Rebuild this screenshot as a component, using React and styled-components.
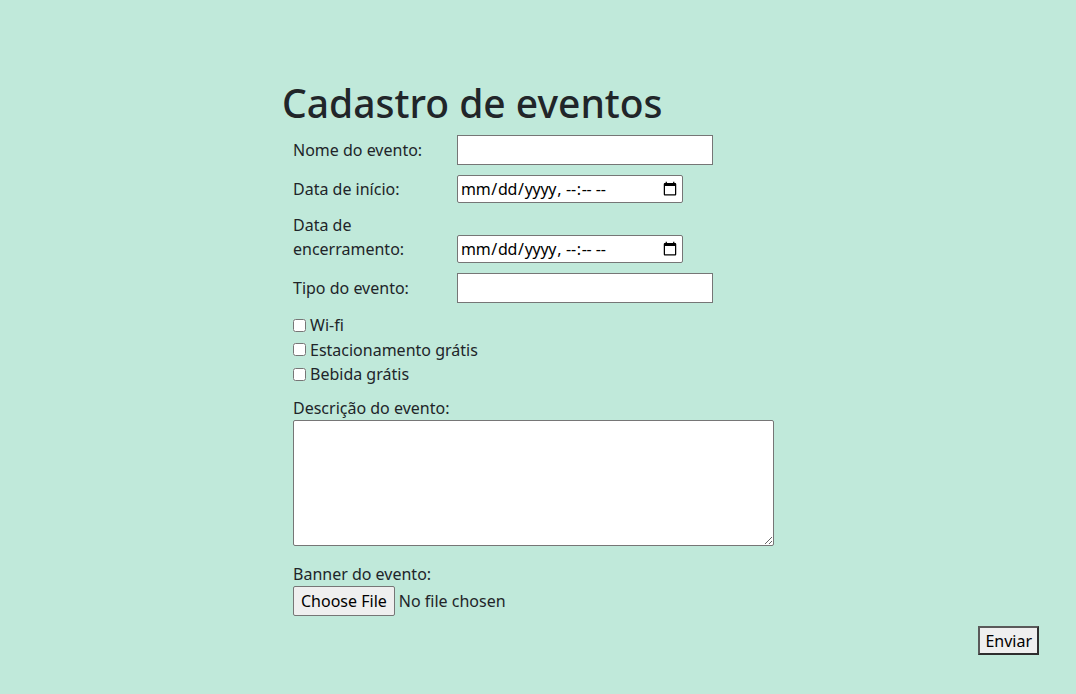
import React from "react";
import styled, { createGlobalStyle } from "styled-components";

const GlobalStyle = createGlobalStyle`
  body {
    margin: 0;
    background-color: #c0e9da;
    color: #212529;
    font-family: "Noto Sans", "Open Sans", sans-serif;
    font-size: 16px;
    line-height: 1.5;
  }
  input, button, textarea {
    font-family: inherit;
    font-size: inherit;
    line-height: inherit;
    color: #000;
  }
`;

const Page = styled.main`
  padding: 80px 37px 30px 282px;
`;

const Title = styled.h1`
  margin: 0 0 8px;
  font-size: 39px;
  font-weight: 500;
  line-height: 1.2;
`;

const Form = styled.form`
  display: flex;
  flex-direction: column;
`;

const Fields = styled.div`
  padding-left: 11px;
  display: flex;
  flex-direction: column;
  gap: 10px;
`;

const Row = styled.div`
  display: grid;
  grid-template-columns: 164px auto;
  align-items: end;
  justify-content: start;
`;

const Label = styled.label`
  display: block;
  width: 140px;
  padding-bottom: ${(p) => (p.$date ? 2 : 3)}px;
`;

const TextInput = styled.input`
  box-sizing: border-box;
  width: 256px;
  height: 30px;
  padding: 1px 2px;
  border: 1px solid #767676;
  background: #fff;
`;

const DateInput = styled(TextInput)`
  width: 226px;
  height: 28px;
  padding: 0 2px;
  border-radius: 2px;
  letter-spacing: -0.3px;
`;

const Checks = styled.div`
  display: flex;
  flex-direction: column;
`;

const CheckRow = styled.label`
  display: flex;
  align-items: center;
  gap: 4px;
  height: 24.5px;
`;

const Box = styled.input`
  margin: 0;
  width: 13px;
  height: 13px;
`;

const Block = styled.div`
  display: flex;
  flex-direction: column;
  margin-top: ${(p) => p.$top || 0}px;
`;

const Area = styled.textarea`
  box-sizing: border-box;
  width: 481px;
  height: 126px;
  border: 1px solid #767676;
  border-radius: 2px;
  background: #fff;
  resize: both;
`;

const FileInput = styled.input`
  color: #212529;

  &::file-selector-button {
    box-sizing: border-box;
    font: inherit;
    height: 30px;
    padding: 0 7px;
    margin-right: 4px;
    color: #000;
    background: #efefef;
    border: 1px solid #767676;
    border-radius: 2px;
  }
`;

const Actions = styled.div`
  display: flex;
  justify-content: flex-end;
  margin-top: 10px;
`;

const Submit = styled.button`
  box-sizing: border-box;
  height: 29px;
  padding: 0 5px;
  background: #efefef;
  border: 2px solid;
  border-color: #5a5a5a #2e2e2e #2e2e2e #5a5a5a;
  border-radius: 0;
  line-height: 24px;
`;

export default function App() {
  return (
    <>
      <GlobalStyle />
      <Page>
        <Title>Cadastro de eventos</Title>
        <Form onSubmit={(e) => e.preventDefault()}>
          <Fields>
            <Row>
              <Label htmlFor="nome">Nome do evento:</Label>
              <TextInput id="nome" type="text" />
            </Row>
            <Row>
              <Label htmlFor="inicio" $date>Data de início:</Label>
              <DateInput id="inicio" type="datetime-local" />
            </Row>
            <Row>
              <Label htmlFor="fim" $date>Data de encerramento:</Label>
              <DateInput id="fim" type="datetime-local" />
            </Row>
            <Row>
              <Label htmlFor="tipo">Tipo do evento:</Label>
              <TextInput id="tipo" type="text" />
            </Row>
            <Checks>
              <CheckRow>
                <Box type="checkbox" />
                Wi-fi
              </CheckRow>
              <CheckRow>
                <Box type="checkbox" />
                Estacionamento grátis
              </CheckRow>
              <CheckRow>
                <Box type="checkbox" />
                Bebida grátis
              </CheckRow>
            </Checks>
            <Block>
              <label htmlFor="desc">Descrição do evento:</label>
              <Area id="desc" />
            </Block>
            <Block $top={6}>
              <label htmlFor="banner">Banner do evento:</label>
              <div>
                <FileInput id="banner" type="file" />
              </div>
            </Block>
          </Fields>
          <Actions>
            <Submit type="submit">Enviar</Submit>
          </Actions>
        </Form>
      </Page>
    </>
  );
}
